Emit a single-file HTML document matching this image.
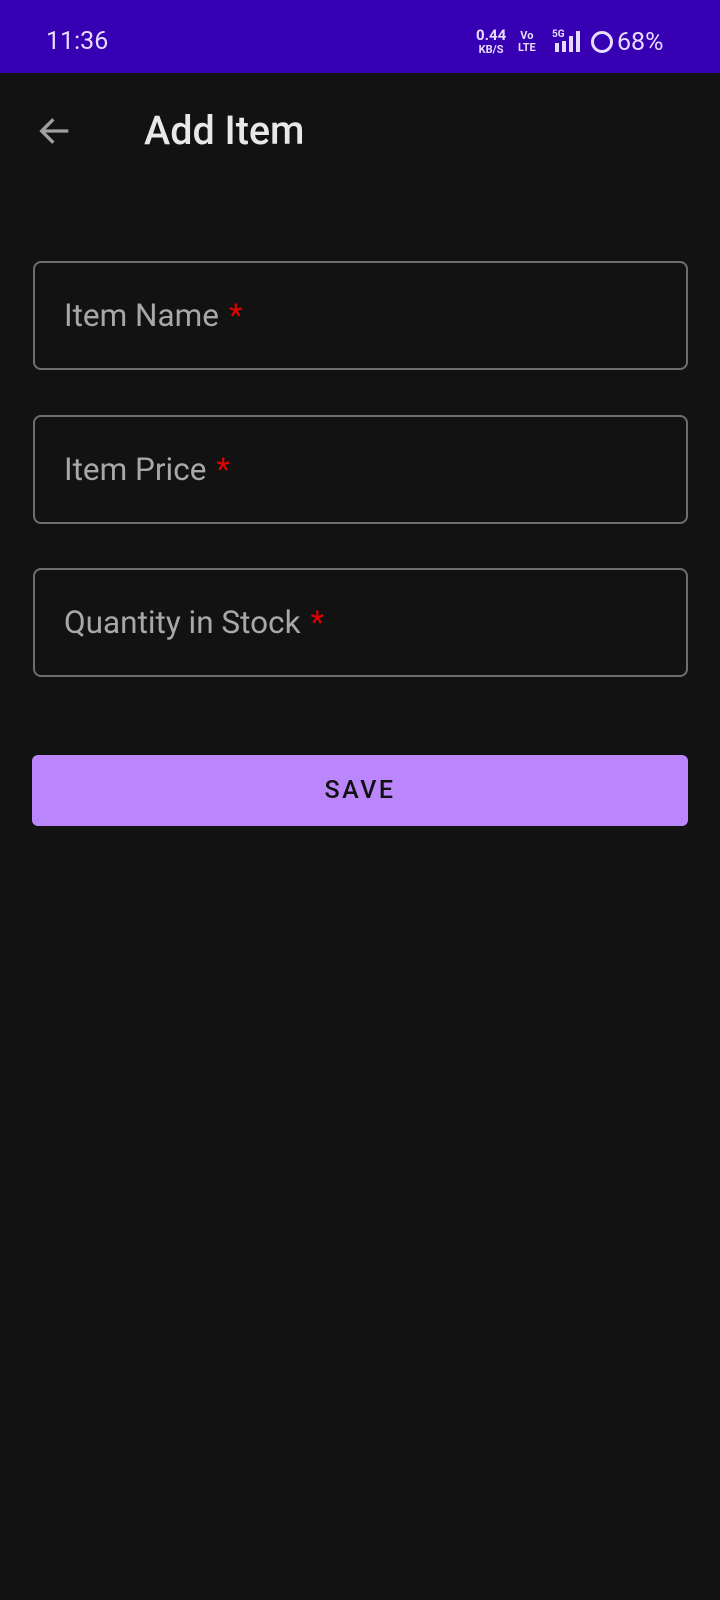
<!DOCTYPE html>
<html><head><meta charset="utf-8"><style>
*{margin:0;padding:0;box-sizing:border-box}
body{width:720px;height:1600px;background:#121212;font-family:"Roboto","Liberation Sans",sans-serif;position:relative;overflow:hidden}
.sb{position:absolute;left:0;top:0;width:720px;height:73px;background:#3700b3;color:#e6dcff}
.abs{position:absolute}
.field{position:absolute;left:33px;width:655px;height:109px;border:2px solid #6e6e6e;border-radius:8px}
.field span{position:absolute;left:29px;top:34px;font-size:31.5px;color:#a8a8a8}
.field b{color:#e00000;font-weight:normal;margin-left:10px}
.btn{position:absolute;left:32px;top:755px;width:656px;height:71px;background:#bb86fc;border-radius:6px;text-align:center;line-height:72px;font-size:25px;letter-spacing:2.5px;color:#111;font-weight:500}
</style></head><body>
<div class="sb">
 <div class="abs" style="left:46px;top:27px;font-size:25px">11:36</div>
 <div class="abs" style="left:476px;top:29px;font-size:15px;font-weight:bold;line-height:13px;text-align:center">0.44<br><span style="font-size:11px">KB/S</span></div>
 <div class="abs" style="left:518px;top:30px;font-size:11px;font-weight:bold;line-height:12px;text-align:center">Vo<br>LTE</div>
 <div class="abs" style="left:552px;top:29px;font-size:10px;font-weight:bold">5G</div>
 <svg class="abs" style="left:553px;top:31px" width="32" height="22"><rect x="2" y="12" width="4" height="9" fill="#e6dcff"/><rect x="9" y="10" width="4" height="11" fill="#e6dcff"/><rect x="16" y="5" width="4" height="16" fill="#e6dcff"/><rect x="23" y="0" width="4" height="21" fill="#e6dcff"/></svg>
 <svg class="abs" style="left:590px;top:30px" width="24" height="24"><circle cx="12" cy="12" r="9.5" fill="none" stroke="#e6dcff" stroke-width="3"/></svg>
 <div class="abs" style="left:617px;top:28px;font-size:25px">68%</div>
</div>
<svg class="abs" style="left:35px;top:111px" width="40" height="40" viewBox="0 0 24 24"><path d="M20 12H5M11 5l-7 7 7 7" fill="none" stroke="#a0a0a0" stroke-width="2"/></svg>
<div class="abs" style="left:144px;top:107px;font-size:39.5px;color:#e8e8e8;font-weight:500">Add Item</div>
<div class="field" style="top:261px"><span>Item Name<b>*</b></span></div>
<div class="field" style="top:415px"><span>Item Price<b>*</b></span></div>
<div class="field" style="top:568px"><span>Quantity in Stock<b>*</b></span></div>
<div class="btn">SAVE</div>
</body></html>
